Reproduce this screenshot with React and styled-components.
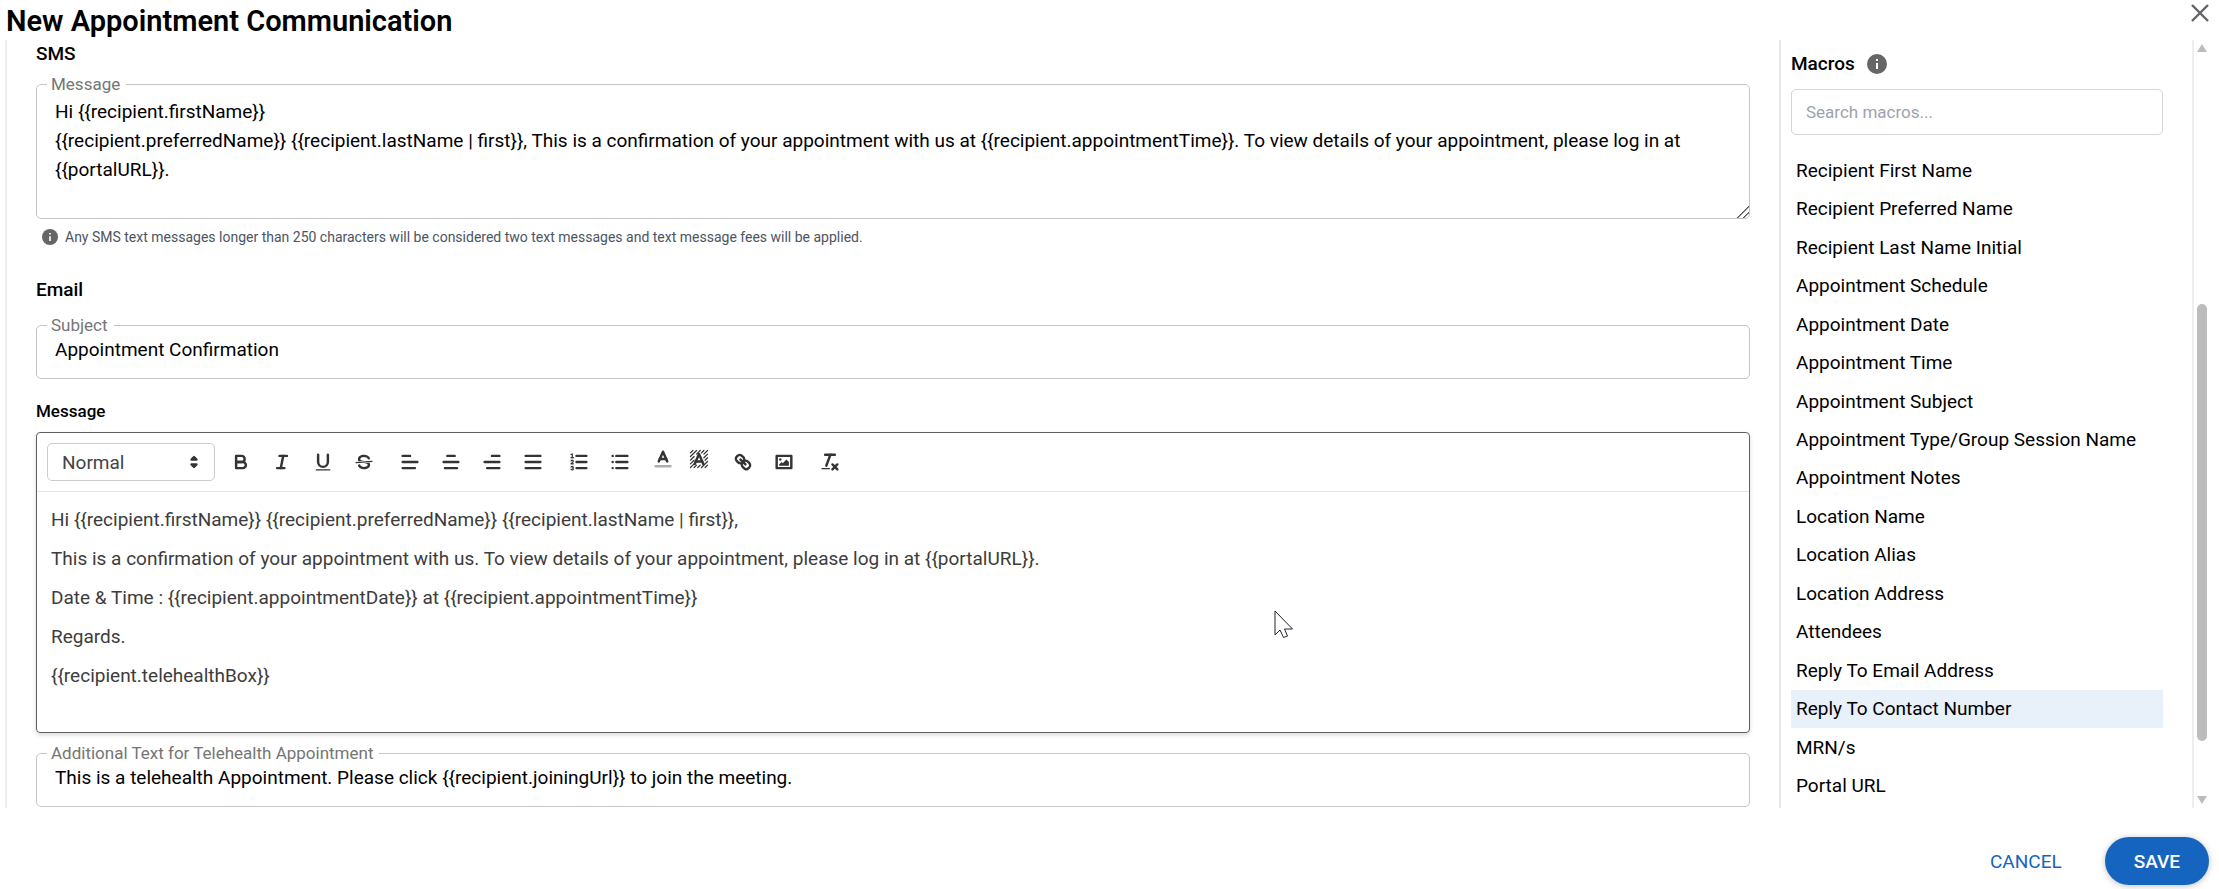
import React, { useState } from 'react';
import styled, { createGlobalStyle } from 'styled-components';

const GlobalStyle = createGlobalStyle`
  * {
    box-sizing: border-box;
  }

  body {
    margin: 0;
    background: #fff;
    color: #000;
    font-family: Roboto, 'Liberation Sans', sans-serif;
    font-size: 19px;
  }

  button, input, select, textarea {
    font-family: inherit;
  }
`;

const Dialog = styled.div`
  position: relative;
  display: flex;
  flex-direction: column;
  min-height: 100vh;
`;

const Header = styled.header`
  display: flex;
  justify-content: space-between;
  align-items: flex-start;
  height: 40px;
  padding: 0 8px 0 6px;
`;

const Title = styled.h1`
  margin: 0;
  font-size: 29px;
  line-height: 42px;
  font-weight: 600;
`;

const CloseButton = styled.button`
  display: flex;
  padding: 2px 0;
  background: none;
  border: none;
  color: #5f6368;
  cursor: pointer;
`;

const Body = styled.div`
  display: flex;
  flex: 1;
  padding: 0 11px 0 5px;
`;

const Panels = styled.div`
  display: flex;
  flex: 1;
  min-width: 0;
  border-left: 2px solid #eeeeee;
  border-right: 2px solid #eeeeee;
`;

const FormPanel = styled.main`
  flex: 1;
  min-width: 0;
  padding: 0 29px;
`;

const SectionTitle = styled.h2`
  margin: 0;
  padding-top: ${(props) => props.$top || 0}px;
  font-size: ${(props) => (props.$small ? 17 : 19)}px;
  line-height: 28px;
  font-weight: 500;
`;

const Field = styled.fieldset`
  display: block;
  min-width: 0;
  margin: ${(props) => props.$top || 0}px 0 0;
  padding: 0;
  border: 1px solid #c4c4c4;
  border-radius: 5px;
`;

const Legend = styled.legend`
  margin-left: 10px;
  padding: 0 6px 0 4px;
  font-size: 17px;
  line-height: 20px;
  color: #757575;
`;

const TextArea = styled.textarea`
  display: block;
  width: 100%;
  height: 124px;
  padding: 3px 18px;
  border: none;
  border-radius: 5px;
  outline: none;
  background: transparent;
  color: #000;
  font-size: 19px;
  line-height: 29px;
  resize: vertical;
  overflow: hidden;

  &::-webkit-resizer {
    background: linear-gradient(
      135deg,
      transparent 57%,
      #555 58%,
      #555 63%,
      transparent 64%,
      transparent 77%,
      #555 78%,
      #555 83%,
      transparent 84%
    );
  }
`;

const TextInput = styled.input`
  display: block;
  width: 100%;
  height: 43px;
  padding: 0 18px 14px;
  border: none;
  outline: none;
  background: transparent;
  color: #000;
  font-size: 19px;
`;

const Hint = styled.p`
  display: flex;
  align-items: center;
  gap: 7px;
  margin: 8px 0 0;
  padding-left: 6px;
  color: #4b5563;
  font-size: 14px;
  line-height: 20px;
`;

const Editor = styled.div`
  margin-top: 7px;
  border: 1px solid #5f6063;
  border-radius: 4px;
  box-shadow: 0 2px 4px rgba(0, 0, 0, 0.15);
`;

const Toolbar = styled.div`
  display: flex;
  align-items: center;
  gap: 5px;
  height: 59px;
  padding: 0 10px;
  border-bottom: 1px solid #e5e7eb;
`;

const ToolGroup = styled.div`
  display: flex;
`;

const ToolButton = styled.button`
  display: flex;
  justify-content: center;
  align-items: center;
  width: ${(props) => (props.$picker ? 36 : 41)}px;
  height: 34px;
  padding: ${(props) => (props.$picker ? '0 0 6px' : 0)};
  background: none;
  border: none;
  color: #333;
  cursor: pointer;
`;

const FormatPicker = styled.label`
  position: relative;
  width: 168px;
`;

const FormatSelect = styled.select`
  appearance: none;
  width: 100%;
  height: 38px;
  padding: 0 14px;
  border: 1px solid #ccc;
  border-radius: 5px;
  background: #fff;
  color: #444;
  font-size: 19px;
`;

// sits over the right end of the select
const PickerArrows = styled.span`
  position: absolute;
  top: 8px;
  right: 10px;
  display: flex;
  color: #333;
  pointer-events: none;
`;

const QuillSvg = styled.svg`
  width: 22px;
  height: 22px;
  fill: none;
  stroke: currentColor;
  stroke-width: 2;
  stroke-linecap: round;
  stroke-linejoin: round;

  .thin {
    stroke-width: 1;
  }

  .fill {
    fill: currentColor;
    stroke: none;
  }
`;

const EditorContent = styled.div`
  min-height: 240px;
  padding: 13px 14px 8px;
  outline: none;
  color: #3c3c3c;

  p {
    margin: 0 0 10px;
    line-height: 29px;
  }
`;

const MacroPanel = styled.aside`
  display: flex;
  flex-direction: column;
  width: 413px;
  padding: 9px 29px 3px 10px;
  border-left: 2px solid #e5e7eb;
`;

const MacroHeading = styled.div`
  display: flex;
  align-items: center;
  gap: 12px;
  height: 30px;
`;

const SearchInput = styled.input`
  width: 100%;
  height: 46px;
  margin: 10px 0 16px;
  padding: 0 14px;
  border: 1px solid #d1d5db;
  border-radius: 5px;
  outline: none;
  font-size: 17px;

  &::placeholder {
    color: #9ca3af;
  }
`;

const MacroList = styled.ul`
  display: grid;
  grid-auto-rows: 1fr;
  flex: 1;
  margin: 0;
  padding: 0;
  list-style: none;
`;

const MacroButton = styled.button`
  width: 100%;
  height: 100%;
  min-height: 38px;
  padding: 0 5px;
  border: none;
  background: ${(props) => (props.$active ? '#e8f0fa' : 'transparent')};
  color: #000;
  font-size: 19px;
  text-align: left;
  cursor: pointer;
`;

const Scrollbar = styled.div`
  display: flex;
  flex-direction: column;
  align-items: center;
  width: 14px;
  padding: 4px 0 4px 2px;
`;

const ScrollSpace = styled.div`
  flex: ${(props) => props.$grow};
`;

const ScrollThumb = styled.div`
  flex: 436;
  width: 10px;
  border-radius: 5px;
  background: #bcbcbc;
`;

const ScrollArrow = styled.div`
  border-left: 5px solid transparent;
  border-right: 5px solid transparent;
  border-${(props) => (props.$up ? 'bottom' : 'top')}: 8px solid #bcbcbc;
`;

const Footer = styled.footer`
  display: flex;
  justify-content: flex-end;
  gap: 14px;
  padding: 29px 10px 4px;
`;

const ActionButton = styled.button`
  height: 48px;
  padding: 0 29px;
  border: none;
  border-radius: 24px;
  background: ${(props) => (props.$primary ? '#1565c0' : 'transparent')};
  color: ${(props) => (props.$primary ? '#fff' : '#1565c0')};
  box-shadow: ${(props) => (props.$primary ? '0 1px 6px rgba(0, 0, 0, 0.25)' : 'none')};
  font-size: 19px;
  font-weight: ${(props) => (props.$primary ? 500 : 400)};
  cursor: pointer;
`;

// pointer floating over the editor
const Pointer = styled.svg`
  position: absolute;
  left: 1274px;
  top: 610px;
  width: 19px;
  height: 29px;
  pointer-events: none;
`;

const InfoIcon = ({ size }) => (
  <svg width={size} height={size} viewBox="0 0 20 20" aria-hidden="true">
    <circle cx="10" cy="10" r="10" fill="#666" />
    <path d="M9 5h2v2H9zM9 9h2v6H9z" fill="#fff" />
  </svg>
);

const lines = (rows) =>
  rows.map(([x1, y1, x2, y2]) => (
    <line key={`${x1}-${y1}-${x2}`} x1={x1} y1={y1} x2={x2} y2={y2} />
  ));

const icons = {
  bold: (
    <>
      <path d="M5,4H9.5A2.5,2.5,0,0,1,12,6.5v0A2.5,2.5,0,0,1,9.5,9H5V4Z" />
      <path d="M5,9h5.5A2.5,2.5,0,0,1,13,11.5v0A2.5,2.5,0,0,1,10.5,14H5V9Z" />
    </>
  ),
  italic: lines([[7, 4, 13, 4], [5, 14, 11, 14], [8, 14, 10, 4]]),
  underline: (
    <>
      <path d="M5,3V9a4.012,4.012,0,0,0,4,4H9a4.012,4.012,0,0,0,4-4V3" />
      <rect className="fill" height="1" rx="0.5" width="12" x="3" y="15" />
    </>
  ),
  strike: (
    <>
      <line className="thin" x1="15.5" x2="2.5" y1="8.5" y2="9.5" />
      <path className="fill" d="M9.007,8C6.542,7.791,6,7.519,6,6.5,6,5.792,7.283,5,9,5c1.571,0,2.765.679,2.969,1.309a1,1,0,0,0,1.9-.617C13.356,4.106,11.354,3,9,3,6.2,3,4,4.538,4,6.5a3.2,3.2,0,0,0,.5,1.843Z" />
      <path className="fill" d="M8.984,10C11.457,10.208,12,10.479,12,11.5c0,0.708-1.283,1.5-3,1.5-1.571,0-2.765-.679-2.969-1.309a1,1,0,1,0-1.9.617C4.644,13.894,6.646,15,9,15c2.8,0,5-1.538,5-3.5a3.2,3.2,0,0,0-.5-1.843Z" />
    </>
  ),
  alignLeft: lines([[3, 4, 9, 4], [3, 9, 15, 9], [3, 14, 13, 14]]),
  alignCenter: lines([[6, 4, 12, 4], [3, 9, 15, 9], [4, 14, 14, 14]]),
  alignRight: lines([[9, 4, 15, 4], [3, 9, 15, 9], [5, 14, 15, 14]]),
  justify: lines([[3, 4, 15, 4], [3, 9, 15, 9], [3, 14, 15, 14]]),
  ordered: (
    <>
      {lines([[7, 4, 15, 4], [7, 9, 15, 9], [7, 14, 15, 14]])}
      <line className="thin" x1="2.5" x2="4.5" y1="5.5" y2="5.5" />
      <path className="fill" d="M3.5,6A0.5,0.5,0,0,1,3,5.5V3.085l-0.276.138A0.5,0.5,0,0,1,2.053,3c-0.124-.247-0.023-0.324.224-0.447l1-.5A0.5,0.5,0,0,1,4,2.5v3A0.5,0.5,0,0,1,3.5,6Z" />
      <path className="thin" d="M4.5,10.5h-2c0-.234,1.85-1.076,1.85-2.234A0.959,0.959,0,0,0,2.5,8.156" />
      <path className="thin" d="M2.5,14.846a0.959,0.959,0,0,0,1.85-.109A0.7,0.7,0,0,0,3.75,14a0.688,0.688,0,0,0,.6-0.736,0.959,0.959,0,0,0-1.85-.109" />
    </>
  ),
  bullet: lines([
    [6, 4, 15, 4], [6, 9, 15, 9], [6, 14, 15, 14],
    [3, 4, 3, 4], [3, 9, 3, 9], [3, 14, 3, 14],
  ]),
  color: (
    <>
      <line x1="3" x2="15" y1="15" y2="15" opacity="0.4" />
      <polyline points="5.5 11 9 3 12.5 11" />
      <line x1="11.63" x2="6.38" y1="9" y2="9" />
    </>
  ),
  background: (
    <>
      <path
        className="thin"
        d="M2,4L4,2M2,7L7,2M2,10L5,7M7,5L10,2M2,13L5,10M11,4L13,2M2,16L5,13M13,5L16,2M5,16L7,14M13,8L16,5M8,16L10,14M14,10L16,8M11,16L16,11M14,16L16,14"
      />
      <polyline points="5.5 13 9 5 12.5 13" />
      <line x1="11.63" x2="6.38" y1="11" y2="11" />
    </>
  ),
  link: (
    <>
      <line x1="7" x2="11" y1="7" y2="11" />
      <path d="M8.9,4.577a3.476,3.476,0,0,1,.36,4.679A3.476,3.476,0,0,1,4.577,8.9C3.185,7.5,2.035,6.4,4.217,4.217S7.5,3.185,8.9,4.577Z" />
      <path d="M13.423,9.1a3.476,3.476,0,0,0-4.679-.36,3.476,3.476,0,0,0,.36,4.679c1.392,1.392,2.5,2.542,4.679.36S14.815,10.5,13.423,9.1Z" />
    </>
  ),
  image: (
    <>
      <rect height="10" width="12" x="3" y="4" />
      <circle className="fill" cx="6" cy="7" r="1" />
      <polyline className="fill" points="5 12 5 11 7 9 8 10 11 7 13 9 13 12 5 12" />
    </>
  ),
  clean: (
    <>
      {lines([[5, 3, 13, 3], [6, 12, 9.35, 3], [11, 11, 15, 15], [15, 11, 11, 15]])}
      <rect className="fill" height="1" rx="0.5" width="7" x="2" y="14" />
    </>
  ),
};

const toolGroups = [
  [['bold', 'Bold'], ['italic', 'Italic'], ['underline', 'Underline'], ['strike', 'Strikethrough']],
  [
    ['alignLeft', 'Align left'],
    ['alignCenter', 'Align center'],
    ['alignRight', 'Align right'],
    ['justify', 'Justify'],
  ],
  [['ordered', 'Ordered list'], ['bullet', 'Bulleted list']],
  [['color', 'Text color'], ['background', 'Highlight color']],
  [['link', 'Insert link'], ['image', 'Insert image']],
  [['clean', 'Clear formatting']],
];

const macros = [
  'Recipient First Name',
  'Recipient Preferred Name',
  'Recipient Last Name Initial',
  'Appointment Schedule',
  'Appointment Date',
  'Appointment Time',
  'Appointment Subject',
  'Appointment Type/Group Session Name',
  'Appointment Notes',
  'Location Name',
  'Location Alias',
  'Location Address',
  'Attendees',
  'Reply To Email Address',
  'Reply To Contact Number',
  'MRN/s',
  'Portal URL',
];

const emailLines = [
  'Hi {{recipient.firstName}} {{recipient.preferredName}} {{recipient.lastName | first}},',
  'This is a confirmation of your appointment with us. To view details of your appointment, please log in at {{portalURL}}.',
  'Date & Time : {{recipient.appointmentDate}} at {{recipient.appointmentTime}}',
  'Regards.',
  '{{recipient.telehealthBox}}',
];

const App = () => {
  const [sms, setSms] = useState(
    'Hi {{recipient.firstName}}\n{{recipient.preferredName}} {{recipient.lastName | first}}, This is a confirmation of your appointment with us at {{recipient.appointmentTime}}. To view details of your appointment, please log in at {{portalURL}}.'
  );
  const [subject, setSubject] = useState('Appointment Confirmation');
  const [telehealth, setTelehealth] = useState(
    'This is a telehealth Appointment. Please click {{recipient.joiningUrl}} to join the meeting.'
  );
  const [search, setSearch] = useState('');
  const [active, setActive] = useState('Reply To Contact Number');

  const visibleMacros = macros.filter((m) => m.toLowerCase().includes(search.toLowerCase()));

  return (
    <Dialog>
      <GlobalStyle />
      <Header>
        <Title>New Appointment Communication</Title>
        <CloseButton type="button" aria-label="Close">
          <svg width="22" height="22" viewBox="0 0 22 22" stroke="currentColor" strokeWidth="2.4">
            <path d="M3 3L19 19M19 3L3 19" />
          </svg>
        </CloseButton>
      </Header>

      <Body>
        <Panels>
          <FormPanel>
            <SectionTitle>SMS</SectionTitle>
            <Field $top={6}>
              <Legend><label htmlFor="sms">Message</label></Legend>
              <TextArea
                id="sms"
                spellCheck={false}
                value={sms}
                onChange={(e) => setSms(e.target.value)}
              />
            </Field>
            <Hint>
              <InfoIcon size={16} />
              Any SMS text messages longer than 250 characters will be considered two text messages and text message fees will be applied.
            </Hint>

            <SectionTitle $top={29}>Email</SectionTitle>
            <Field $top={11}>
              <Legend><label htmlFor="subject">Subject</label></Legend>
              <TextInput id="subject" value={subject} onChange={(e) => setSubject(e.target.value)} />
            </Field>

            <SectionTitle as="h3" $small $top={18}>Message</SectionTitle>
            <Editor>
              <Toolbar>
                <FormatPicker>
                  <FormatSelect aria-label="Text style" defaultValue="Normal">
                    <option>Normal</option>
                    <option>Heading</option>
                    <option>Subheading</option>
                  </FormatSelect>
                  <PickerArrows>
                    <QuillSvg viewBox="0 0 18 18">
                      <polygon fill="currentColor" points="7 11 9 13 11 11 7 11" />
                      <polygon fill="currentColor" points="7 7 9 5 11 7 7 7" />
                    </QuillSvg>
                  </PickerArrows>
                </FormatPicker>
                {toolGroups.map((group) => (
                  <ToolGroup key={group[0][0]}>
                    {group.map(([name, label]) => (
                      <ToolButton
                        key={name}
                        type="button"
                        aria-label={label}
                        $picker={name === 'color' || name === 'background'}
                      >
                        <QuillSvg viewBox="0 0 18 18">{icons[name]}</QuillSvg>
                      </ToolButton>
                    ))}
                  </ToolGroup>
                ))}
              </Toolbar>
              <EditorContent
                contentEditable
                suppressContentEditableWarning
                spellCheck={false}
                role="textbox"
                aria-label="Email message"
              >
                {emailLines.map((line) => (
                  <p key={line}>{line}</p>
                ))}
              </EditorContent>
            </Editor>

            <Field $top={10}>
              <Legend><label htmlFor="telehealth">Additional Text for Telehealth Appointment</label></Legend>
              <TextInput
                id="telehealth"
                value={telehealth}
                onChange={(e) => setTelehealth(e.target.value)}
              />
            </Field>
          </FormPanel>

          <MacroPanel>
            <MacroHeading>
              <SectionTitle>Macros</SectionTitle>
              <InfoIcon size={20} />
            </MacroHeading>
            <SearchInput
              type="text"
              aria-label="Search macros"
              placeholder="Search macros..."
              value={search}
              onChange={(e) => setSearch(e.target.value)}
            />
            <MacroList>
              {visibleMacros.map((macro) => (
                <li key={macro}>
                  <MacroButton
                    type="button"
                    $active={macro === active}
                    onClick={() => setActive(macro)}
                  >
                    {macro}
                  </MacroButton>
                </li>
              ))}
            </MacroList>
          </MacroPanel>
        </Panels>

        <Scrollbar aria-hidden="true">
          <ScrollArrow $up />
          <ScrollSpace $grow={252} />
          <ScrollThumb />
          <ScrollSpace $grow={55} />
          <ScrollArrow />
        </Scrollbar>
      </Body>

      <Footer>
        <ActionButton type="button">CANCEL</ActionButton>
        <ActionButton type="button" $primary>SAVE</ActionButton>
      </Footer>

      <Pointer viewBox="0 0 19 29" aria-hidden="true">
        <path
          d="M1 1V25L6 20L9.500 27.500L13.500 26L10.500 19H18.500Z"
          fill="#fff"
          stroke="#223"
          strokeWidth="1"
        />
      </Pointer>
    </Dialog>
  );
};

export default App;
